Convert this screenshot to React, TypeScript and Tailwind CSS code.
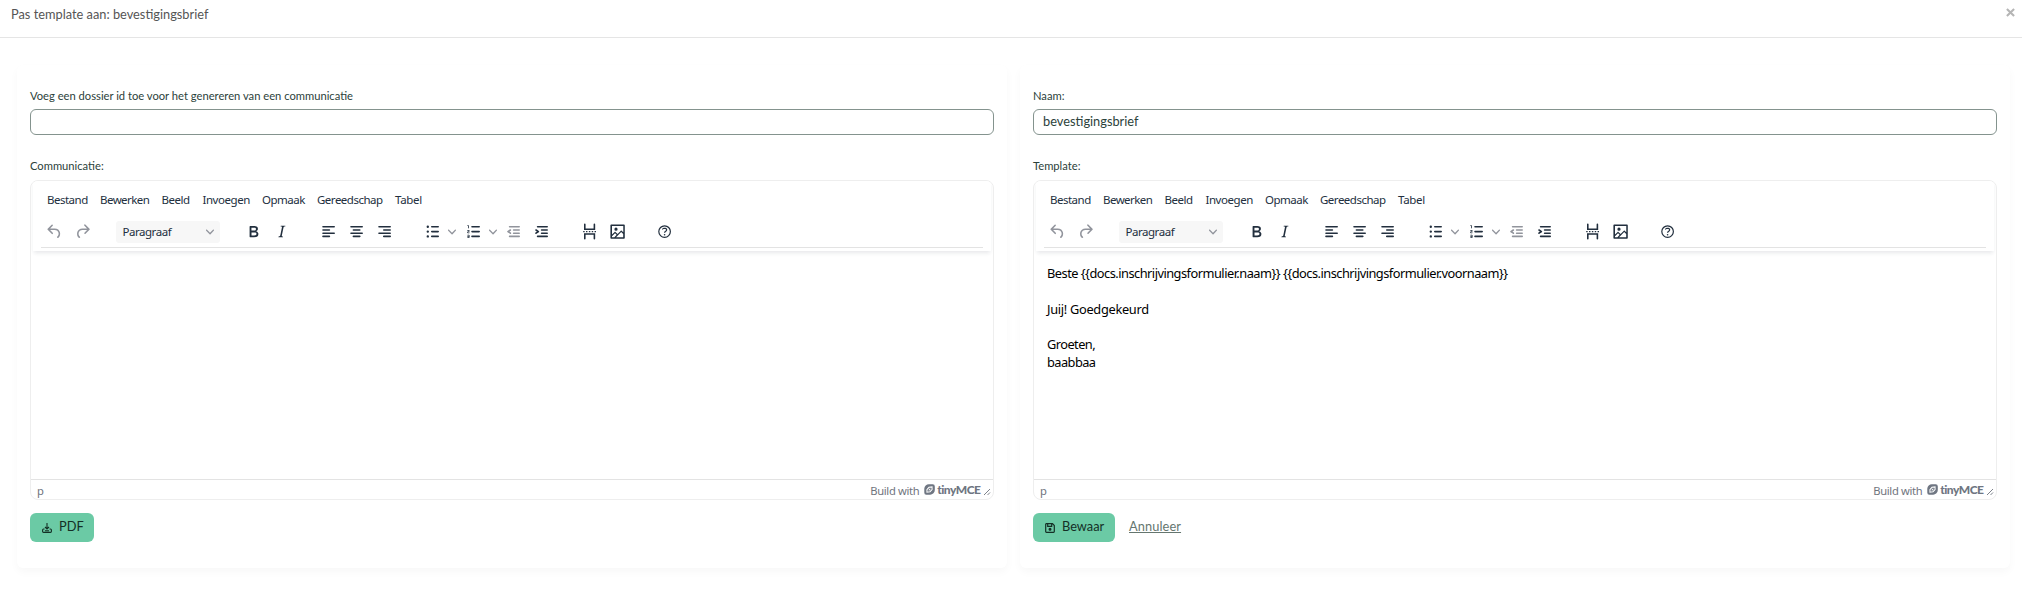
import React from "react";

type IconProps = { d: string; className?: string };

function Icon({ d, className = "" }: IconProps) {
  return (
    <svg viewBox="0 0 24 24" className={`size-[19.2px] shrink-0 fill-current ${className}`}>
      <path fillRule="evenodd" d={d} />
    </svg>
  );
}

const paths = {
  undo: "M6.4 8H12c3.7 0 6.2 2 6.8 5.1.6 2.7-.4 5.6-2.3 6.8a1 1 0 0 1-1-1.8c1.1-.6 1.8-2.7 1.4-4.6-.5-2.1-2.1-3.5-4.9-3.5H6.4l3.3 3.3a1 1 0 1 1-1.4 1.4l-5-5a1 1 0 0 1 0-1.4l5-5a1 1 0 0 1 1.4 1.4L6.4 8Z",
  redo: "M17.6 10H12c-2.8 0-4.4 1.4-4.9 3.5-.4 2 .3 4 1.4 4.6a1 1 0 1 1-1 1.8c-2-1.2-2.9-4.1-2.3-6.8.6-3 3-5.1 6.8-5.1h5.6l-3.3-3.3a1 1 0 1 1 1.4-1.4l5 5a1 1 0 0 1 0 1.4l-5 5a1 1 0 0 1-1.4-1.4l3.3-3.3Z",
  bold: "M7.8 19c-.3 0-.5 0-.6-.2l-.2-.5V5.7c0-.2 0-.4.2-.5l.6-.2h5c1.5 0 2.7.3 3.5 1 .7.6 1.1 1.4 1.1 2.5a3 3 0 0 1-.6 1.9c-.4.6-1 1-1.6 1.2.4.1.9.3 1.3.6s.8.7 1 1.2c.4.4.5 1 .5 1.6 0 1.3-.4 2.3-1.3 3-.8.7-2.1 1-3.8 1H7.8Zm5-8.3c.6 0 1.2-.1 1.6-.5.4-.3.6-.7.6-1.3 0-1.1-.8-1.7-2.3-1.7H9.3v3.5h3.4Zm.5 6c.7 0 1.3-.1 1.7-.4.4-.4.6-.9.6-1.5s-.2-1-.7-1.4c-.4-.3-1-.4-2-.4H9.4v3.8h4Z",
  italic: "m16.7 4.7-.1.9h-.3c-.6 0-1 0-1.4.3-.3.3-.4.6-.5 1.1l-2.1 9.8v.6c0 .5.4.8 1.4.8h.2l-.2.8H8l.2-.8h.2c1.1 0 1.8-.5 2-1.5l2-9.8.1-.5c0-.6-.4-.8-1.4-.8h-.3l.2-.9h5.8Z",
  left: "M5 5h14a1 1 0 0 1 0 2H5a1 1 0 1 1 0-2Zm0 4h8a1 1 0 0 1 0 2H5a1 1 0 1 1 0-2Zm0 4h14a1 1 0 0 1 0 2H5a1 1 0 0 1 0-2Zm0 4h8a1 1 0 0 1 0 2H5a1 1 0 0 1 0-2Z",
  center: "M5 5h14a1 1 0 0 1 0 2H5a1 1 0 1 1 0-2Zm3 4h8a1 1 0 0 1 0 2H8a1 1 0 1 1 0-2Zm-3 4h14a1 1 0 0 1 0 2H5a1 1 0 0 1 0-2Zm3 4h8a1 1 0 0 1 0 2H8a1 1 0 0 1 0-2Z",
  right: "M5 5h14a1 1 0 0 1 0 2H5a1 1 0 1 1 0-2Zm6 4h8a1 1 0 0 1 0 2h-8a1 1 0 1 1 0-2Zm-6 4h14a1 1 0 0 1 0 2H5a1 1 0 0 1 0-2Zm6 4h8a1 1 0 0 1 0 2h-8a1 1 0 0 1 0-2Z",
  bullets: "M11 5h8a1 1 0 0 1 0 2h-8a1 1 0 0 1 0-2Zm0 6h8a1 1 0 0 1 0 2h-8a1 1 0 0 1 0-2Zm0 6h8a1 1 0 0 1 0 2h-8a1 1 0 0 1 0-2ZM4.5 6a1.5 1.5 0 1 1 3 0 1.5 1.5 0 0 1-3 0Zm0 6a1.5 1.5 0 1 1 3 0 1.5 1.5 0 0 1-3 0Zm0 6a1.5 1.5 0 1 1 3 0 1.5 1.5 0 0 1-3 0Z",
  numbers: "M10 17h9a1 1 0 0 1 0 2h-9a1 1 0 0 1 0-2Zm0-6h9a1 1 0 0 1 0 2h-9a1 1 0 0 1 0-2Zm0-6h9a1 1 0 0 1 0 2h-9a1 1 0 1 1 0-2ZM6 4v3.5c0 .3-.2.5-.5.5a.5.5 0 0 1-.5-.5V5h-.5a.5.5 0 0 1 0-1H6Zm-1 8.8.2.2h1.3c.3 0 .5.2.5.5s-.2.5-.5.5H4.9a1 1 0 0 1-.9-1V13c0-.4.3-.8.6-1l1.2-.4.2-.3a.2.2 0 0 0-.2-.2H4.5a.5.5 0 0 1-.5-.5c0-.3.2-.5.5-.5h1.6c.5 0 .9.4.9 1v.1c0 .4-.3.8-.6 1l-1.2.4-.2.3ZM7 17v2c0 .6-.4 1-1 1H4.5a.5.5 0 0 1 0-1h1.2c.2 0 .3-.1.3-.3 0-.2-.1-.3-.3-.3H4.4a.4.4 0 1 1 0-.8h1.3c.2 0 .3-.1.3-.3 0-.2-.1-.3-.3-.3H4.5a.5.5 0 1 1 0-1H6c.6 0 1 .4 1 1Z",
  outdent: "M7 5h12a1 1 0 0 1 0 2H7a1 1 0 1 1 0-2Zm5 4h7a1 1 0 0 1 0 2h-7a1 1 0 0 1 0-2Zm0 4h7a1 1 0 0 1 0 2h-7a1 1 0 0 1 0-2Zm-5 4h12a1 1 0 0 1 0 2H7a1 1 0 0 1 0-2Zm1.6-3.8a1 1 0 0 1-1.2 1.6l-3-2a1 1 0 0 1 0-1.6l3-2a1 1 0 0 1 1.2 1.6L6.8 12l1.8 1.2Z",
  indent: "M7 5h12a1 1 0 0 1 0 2H7a1 1 0 1 1 0-2Zm5 4h7a1 1 0 0 1 0 2h-7a1 1 0 0 1 0-2Zm0 4h7a1 1 0 0 1 0 2h-7a1 1 0 0 1 0-2Zm-5 4h12a1 1 0 0 1 0 2H7a1 1 0 0 1 0-2Zm-2.6-3.8L6.2 12l-1.8-1.2a1 1 0 0 1 1.2-1.6l3 2a1 1 0 0 1 0 1.6l-3 2a1 1 0 1 1-1.2-1.6Z",
  pageBreak: "M4 11.2h1.8v1.6H4ZM7.5 11.2h1.8v1.6H7.5ZM11.1 11.2h1.8v1.6h-1.8ZM14.7 11.2h1.8v1.6h-1.8ZM18.2 11.2H20v1.6h-1.8ZM7 3v5h10V3a1 1 0 0 1 2 0v7H5V3a1 1 0 0 1 2 0Zm0 18v-5h10v5a1 1 0 0 0 2 0v-7H5v7a1 1 0 0 0 2 0Z",
  image: "m5 15.7 3.3-3.2c.3-.3.7-.3 1 0L12 15l4.1-4c.3-.4.8-.4 1 0l2 1.9V5H5v10.7ZM5 18V19h3l2.8-2.9-2-2L5 17.9Zm14-3-2.5-2.4-6.4 6.5H19v-4ZM4 3h16c.6 0 1 .4 1 1v16c0 .6-.4 1-1 1H4a1 1 0 0 1-1-1V4c0-.6.4-1 1-1Zm6 8a2 2 0 1 0 0-4 2 2 0 0 0 0 4Z",
  help: "M12 5.5a6.5 6.5 0 1 0 0 13 6.5 6.5 0 0 0 0-13ZM12 4a8 8 0 1 1 0 16 8 8 0 0 1 0-16ZM9.6 9.7a.7.7 0 0 1-.7-.8c0-1.1 1.5-1.8 3.2-1.8 1.8 0 3.2.8 3.2 2.4 0 1.4-.4 2.1-1.5 2.8-.2 0-.3.1-.3.2a2 2 0 0 0-.8.8.8.8 0 0 1-1.4-.6c.3-.7.8-1 1.3-1.5l.4-.2c.7-.4.8-.6.8-1.5 0-.5-.6-.9-1.7-.9-.5 0-1 .1-1.4.3-.2 0-.3.1-.3.2v-.2c0 .4-.4.8-.8.8ZM12 15a1 1 0 1 1 0 2 1 1 0 0 1 0-2Z",
};

function Chevron({ className = "" }: { className?: string }) {
  return (
    <svg viewBox="0 0 10 10" className={`size-2 shrink-0 fill-[#91949c] ${className}`}>
      <path d="M8.7 2.2c.3-.3.8-.3 1 0 .4.4.4.9 0 1.2L5.7 7.8c-.3.3-.9.3-1.2 0L.2 3.4a.8.8 0 0 1 0-1.2c.3-.3.8-.3 1.1 0L5 6l3.7-3.8Z" />
    </svg>
  );
}

const menus = [
  { label: "Bestand", cls: "w-[53px] tracking-[-0.5px]" },
  { label: "Bewerken", cls: "w-[61.5px] tracking-[-0.55px]" },
  { label: "Beeld", cls: "w-[41px] tracking-[-0.45px]" },
  { label: "Invoegen", cls: "w-[59.5px] tracking-[-0.45px]" },
  { label: "Opmaak", cls: "w-[55px] tracking-[-0.5px]" },
  { label: "Gereedschap", cls: "w-[78px] tracking-[-0.5px]" },
  { label: "Tabel", cls: "w-[40px] tracking-[-0.3px]" },
];

function Editor({ children }: { children?: React.ReactNode }) {
  return (
    <div className="flex h-[320px] flex-col overflow-hidden rounded-lg border border-[#eee] bg-white font-['Noto_Sans',sans-serif] text-[#222f3e]">
      <div className="z-10 mx-0.5 h-[70px] shrink-0 bg-white px-2 shadow-[0_3px_4px_-1px_rgba(34,47,62,0.11)]">
        <div className="flex h-[38px] items-center pl-[6px] text-[11.5px]">
          {menus.map((m) => (
            <span key={m.label} className={`shrink-0 whitespace-nowrap ${m.cls}`}>{m.label}</span>
          ))}
        </div>
        <div className="h-[29px] border-b border-[#e3e3e3] pt-0.5">
          <div className="flex h-[22px] items-center pl-[4px]">
            <Icon d={paths.undo} className="text-[#91949c]" />
            <Icon d={paths.redo} className="ml-[9px] text-[#91949c]" />
            <div className="ml-[24px] flex h-[22px] w-[104px] shrink-0 items-center justify-between rounded-[3px] bg-[#f7f7f7] pr-[6px] pl-[6px] text-[11.5px] tracking-[-0.45px]">
              <span>Paragraaf</span>
              <Chevron />
            </div>
            <Icon d={paths.bold} className="ml-[24px]" />
            <Icon d={paths.italic} className="ml-[8.8px]" />
            <Icon d={paths.left} className="ml-[27.6px]" />
            <Icon d={paths.center} className="ml-[8.8px]" />
            <Icon d={paths.right} className="ml-[8.8px]" />
            <Icon d={paths.bullets} className="ml-[28.8px]" />
            <Chevron className="ml-[6px]" />
            <Icon d={paths.numbers} className="ml-[7.5px]" />
            <Chevron className="ml-[6px]" />
            <Icon d={paths.outdent} className="ml-[7px] text-[#91949c]" />
            <Icon d={paths.indent} className="ml-[8.8px]" />
            <Icon d={paths.pageBreak} className="ml-[28.6px]" />
            <Icon d={paths.image} className="ml-[8.8px]" />
            <Icon d={paths.help} className="ml-[28px]" />
          </div>
        </div>
      </div>
      <div className="grow px-[13px] pt-[14px] text-[12.8px] leading-[17.9px] text-black">{children}</div>
      <div className="flex h-5 shrink-0 items-center justify-between border-t border-[#e3e3e3] pr-[2px] pl-[6px] text-[11.2px] text-[#6f747d]">
        <span className="pt-1">p</span>
        <div className="flex items-center">
          <span className="pt-1 tracking-[-0.35px]">Build with</span>
          <svg viewBox="0 0 12 12" className="ml-[5px] size-[11px]">
            <path fill="#6f7682" d="M5.500.3h4A2.3 2.3 0 0 1 11.800 2.600v4A5.100 5.100 0 0 1 6.700 11.700h-4A2.300 2.300 0 0 1 .3 9.300v-4A5.100 5.100 0 0 1 5.500.3Z" />
            <path fill="none" stroke="#fff" strokeWidth="1.1" d="M3.2 6.2 5.4 3.6 8.8 3.2V6L6.600 8.400 3.200 8.900ZM5.200 6.900 6.900 5.200" />
          </svg>
          <span className="ml-[2px] font-['Lato',sans-serif] text-[12px] leading-[12px] font-black tracking-[-0.5px] text-[#6f7682]">tinyMCE</span>
          <svg viewBox="0 0 8 8" className="mt-1 ml-[2.5px] size-[8px]">
            <path d="M1 7 7 1M4.5 7 7 4.5" stroke="#7d828b" fill="none" />
          </svg>
        </div>
      </div>
    </div>
  );
}

type PanelProps = {
  label: string;
  value: string;
  editorLabel: string;
  content?: React.ReactNode;
  actions: React.ReactNode;
};

function Panel({ label, value, editorLabel, content, actions }: PanelProps) {
  return (
    <section className="h-[503px] w-[990px] rounded-md bg-white px-[13px] pt-[22px] shadow-[0_4px_8px_rgba(0,0,0,0.03)]">
      <label className="block h-[22px] pt-px text-[11.2px] leading-[16px]">{label}</label>
      <input defaultValue={value} className="block h-[26px] w-full rounded-md border border-[#84938e] bg-white px-[9px] pb-0.5 text-[12.8px] text-[#2c423b] outline-none" />
      <label className="block h-[45px] pt-[22px] text-[11.2px] leading-[18px]">{editorLabel}</label>
      <Editor>{content}</Editor>
      <div className="mt-[13px] flex h-[29px] items-center text-[12.8px]">{actions}</div>
    </section>
  );
}

export default function App() {
  return (
    <main className="h-[590px] w-[2022px] overflow-hidden bg-white font-['Lato',sans-serif] text-[#2c423b]">
      <header className="flex h-[38px] justify-between border-b border-[#e5e5e5] px-[11px] text-[12.8px] text-[#555]">
        <h1 className="pt-[5px] leading-[19px]">Pas template aan: bevestigingsbrief</h1>
        <svg viewBox="0 0 10 10" className="-mr-[4px] mt-[8px] size-[9px]">
          <path d="m1 1 8 8m0-8-8 8" stroke="#b5b5b5" strokeWidth="2.3" />
        </svg>
      </header>
      <div className="flex gap-[13px] pt-[27px] pl-[17px]">
        <Panel
          label="Voeg een dossier id toe voor het genereren van een communicatie"
          value=""
          editorLabel="Communicatie:"
          actions={
            <button className="flex h-[29px] w-[64px] items-center rounded-md bg-[#6bcaa5] pb-0.5 pl-3 text-[#142f25]">
              <svg viewBox="0 0 10 10" className="mt-0.5 size-[10px]" fill="none" stroke="currentColor" strokeWidth="1.1">
                <path d="M5 0V6M3 4l2 2 2-2M2.5 6H1.5Q.6 6 .6 7V8.500Q.6 9.400 1.500 9.400H8.500Q9.400 9.400 9.400 8.500V7Q9.400 6 8.500 6H7.500M3 7.700H7" />
              </svg>
              <span className="ml-[7px]">PDF</span>
            </button>
          }
        />
        <Panel
          label="Naam:"
          value="bevestigingsbrief"
          editorLabel="Template:"
          content={
            <>
              <p className="tracking-[-0.51px]">{"Beste {{docs.inschrijvingsformulier.naam}} {{docs.inschrijvingsformulier.voornaam}}"}</p>
              <p>&nbsp;</p>
              <p className="tracking-[-0.3px]">Juij! Goedgekeurd</p>
              <p>&nbsp;</p>
              <p className="-mt-px tracking-[-0.55px]">Groeten,</p>
              <p className="tracking-[-0.55px]">baabbaa</p>
            </>
          }
          actions={
            <>
              <button className="flex h-[29px] w-[82px] items-center rounded-md bg-[#6bcaa5] pb-0.5 pl-3 text-[#142f25]">
                <svg viewBox="0 0 10 10" className="mt-0.5 size-[10px]" fill="none" stroke="currentColor" strokeWidth="1.2">
                  <path d="M1.2.7H7.5L9.3 2.5V8.5Q9.3 9.3 8.5 9.3H1.5Q.7 9.3.7 8.5V1.2ZM2.7 1v2.3h4V1" />
                  <circle cx="5" cy="6.3" r=".9" fill="currentColor" />
                </svg>
                <span className="ml-[7px]">Bewaar</span>
              </button>
              <a className="ml-[14px] pb-0.5 tracking-[0.1px] text-[#65766f] underline">Annuleer</a>
            </>
          }
        />
      </div>
    </main>
  );
}
